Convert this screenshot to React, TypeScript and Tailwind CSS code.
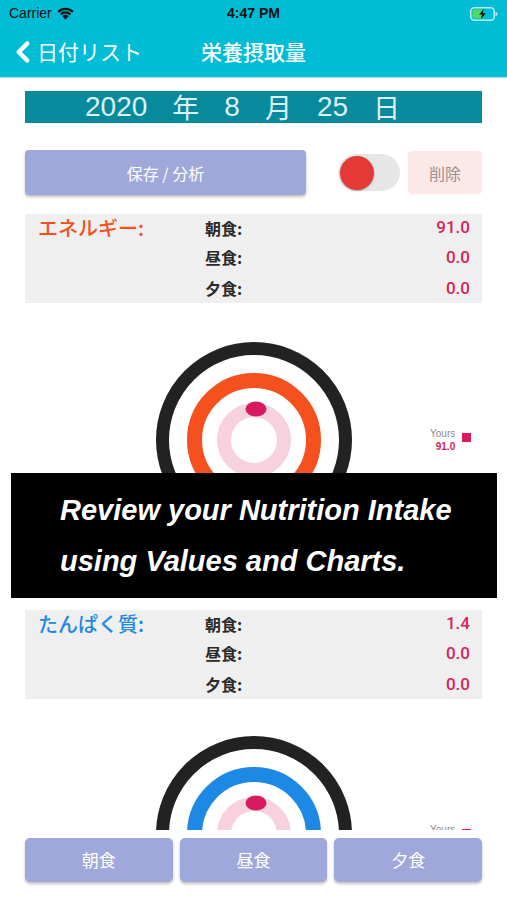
import { ChevronLeft } from 'lucide-react';

const jp = "font-['Noto_Sans_CJK_JP','Noto_Sans',sans-serif]";

interface MealRow {
  meal: string;
  value: string;
}

interface NutrientProps {
  label: string;
  labelColor: string;
  rows: MealRow[];
}

const NutrientTable = ({ label, labelColor, rows }: NutrientProps) => {
  const heights = ['h-[27px]', 'h-[32px]', 'h-[30px]'];
  return (
    <div className="mx-[25px] flex h-[89px] flex-col bg-[#efefef]">
      {rows.map((row, i) => (
        <div key={row.meal} className={`flex items-center ${heights[i]}`}>
          <div
            className={`w-[180px] pl-[13px] text-[20px] font-medium leading-none ${labelColor}`}
          >
            {i === 0 ? label : ''}
          </div>
          <div className="text-[16px] font-bold leading-none text-[#2a2a2a]">
            {row.meal}:
          </div>
          <div className="ml-auto pr-[12px] font-['Roboto',sans-serif] text-[17px] font-medium leading-none text-[#d6245f]">
            {row.value}
          </div>
        </div>
      ))}
    </div>
  );
};

const RingChart = ({ ringColor, top }: { ringColor: string; top: string }) => (
  <div className={`relative h-[307px] ${top}`}>
    <svg
      width="200"
      height="200"
      viewBox="0 0 200 200"
      className="ml-[154px]"
    >
      <circle cx="100" cy="100" r="91.5" fill="none" stroke="#222" strokeWidth="13" />
      <circle cx="100" cy="100" r="59.5" fill="none" stroke={ringColor} strokeWidth="15" />
      <circle cx="100" cy="100" r="30" fill="none" stroke="#f7d1de" strokeWidth="14" />
      <ellipse cx="102" cy="69" rx="10.5" ry="7.5" fill="#d81b60" />
    </svg>
    <div className="absolute left-[430px] top-[124px] flex items-start gap-[7px] font-['Liberation_Sans',sans-serif]">
      <div className="flex flex-col items-end leading-[13px]">
        <span className="text-[10px] text-[#8a8a8a]">Yours</span>
        <span className="text-[10px] font-bold text-[#d81b60]">91.0</span>
      </div>
      <div className="mt-[6px] h-[9px] w-[9px] bg-[#d81b60]" />
    </div>
  </div>
);

const App = () => {
  const energyRows: MealRow[] = [
    { meal: '朝食', value: '91.0' },
    { meal: '昼食', value: '0.0' },
    { meal: '夕食', value: '0.0' },
  ];
  const proteinRows: MealRow[] = [
    { meal: '朝食', value: '1.4' },
    { meal: '昼食', value: '0.0' },
    { meal: '夕食', value: '0.0' },
  ];

  return (
    <div className={`relative flex h-[900px] w-full flex-col overflow-hidden bg-white ${jp}`}>
      {/* status bar + nav */}
      <div className="bg-[#00bcd4]">
        <div className="flex h-[27px] items-center px-[9px] font-['Liberation_Sans',sans-serif] text-[14px] text-[#111]">
          <div className="flex w-[160px] items-center gap-[5px]">
            <span>Carrier</span>
            <svg width="17" height="13" viewBox="0 0 17 13">
              <path d="M8.5 12.5 L5.2 9 A4.8 4.8 0 0 1 11.8 9 Z" fill="#111" />
              <path d="M2.9 6.6 A8 8 0 0 1 14.1 6.6 L12.6 8.2 A5.8 5.8 0 0 0 4.4 8.2 Z" fill="#111" />
              <path d="M0.5 4.1 A11.4 11.4 0 0 1 16.5 4.1 L15 5.7 A9.2 9.2 0 0 0 2 5.7 Z" fill="#111" />
            </svg>
          </div>
          <div className="flex-1 text-center font-bold">4:47 PM</div>
          <div className="flex w-[160px] justify-end pr-[0px]">
            <svg width="28" height="14" viewBox="0 0 28 14">
              <rect x="0.75" y="0.75" width="23.5" height="12.5" rx="3.5" fill="none" stroke="#b9ecf2" strokeWidth="1.5" />
              <rect x="2.5" y="2.5" width="10.5" height="9" rx="1.8" fill="#4cd964" />
              <path d="M25.5 5 v4 a2 2 0 0 0 0 -4z" fill="#b9ecf2" />
              <path d="M13.6 2 L9.2 7.6 H12 L10.9 12 L15.6 6.2 H12.8 Z" fill="#111" />
            </svg>
          </div>
        </div>
        <div className="flex h-[50px] items-center text-white">
          <ChevronLeft size={34} strokeWidth={3.2} className="ml-[6px] -mr-[3px]" />
          <span className="text-[21px]">日付リスト</span>
          <span className="ml-[59px] text-[21px] font-medium">栄養摂取量</span>
        </div>
        <div className="h-[1px] bg-[#a8e6ef]" />
      </div>

      {/* scroll content */}
      <div className="h-[752px] overflow-hidden">
        <div className="mx-[25px] mt-[13px] flex h-[32px] items-center gap-[25px] bg-[#078a9c] pl-[60px] font-['Liberation_Sans',sans-serif] text-[28px] text-[#dcf2f8]">
          <span>2020</span>
          <span className={`${jp} text-[27px]`}>年</span>
          <span>8</span>
          <span className={`${jp} text-[27px]`}>月</span>
          <span>25</span>
          <span className={`${jp} text-[27px]`}>日</span>
        </div>

        <div className="mx-[25px] mt-[27px] flex h-[45px] items-center">
          <button className="flex h-[45px] w-[281px] items-center justify-center rounded-[4px] bg-[#9fa8da] text-[16px] text-white shadow-[0_2px_3px_rgba(0,0,0,0.25)]">
            保存 / 分析
          </button>
          <div className="ml-[32px] flex h-[37px] w-[62px] items-center rounded-full bg-[#e6e6e6]">
            <div className="ml-[2px] h-[34px] w-[34px] rounded-full bg-[#e53935] shadow-[0_1px_2px_rgba(0,0,0,0.3)]" />
          </div>
          <button className="ml-auto flex h-[43px] w-[74px] items-center justify-center rounded-[4px] bg-[#fde8e8] text-[16px] text-[#9a8f92]">
            削除
          </button>
        </div>

        <div className="mt-[19px]">
          <NutrientTable label="エネルギー:" labelColor="text-[#f4511e]" rows={energyRows} />
        </div>
        <RingChart ringColor="#f4511e" top="pt-[37px]" />
        <NutrientTable label="たんぱく質:" labelColor="text-[#1e88e5]" rows={proteinRows} />
        <RingChart ringColor="#1e88e5" top="pt-[35px]" />
      </div>

      {/* bottom meal buttons */}
      <div className="mx-[25px] mt-[8px] grid grid-cols-3 gap-[7px]">
        {['朝食', '昼食', '夕食'].map((m) => (
          <button
            key={m}
            className="flex h-[44px] items-center justify-center rounded-[5px] bg-[#9fa8da] text-[17px] text-white shadow-[0_2px_3px_rgba(0,0,0,0.25)]"
          >
            {m}
          </button>
        ))}
      </div>

      {/* promo banner over content */}
      <div className="absolute left-[11px] top-[473px] flex h-[125px] w-[486px] flex-col justify-center bg-black pl-[49px] font-['Liberation_Sans',sans-serif] text-[29px] font-bold italic leading-[51px] text-white">
        <span>Review your Nutrition Intake</span>
        <span>using Values and Charts.</span>
      </div>
    </div>
  );
};

export default App;
